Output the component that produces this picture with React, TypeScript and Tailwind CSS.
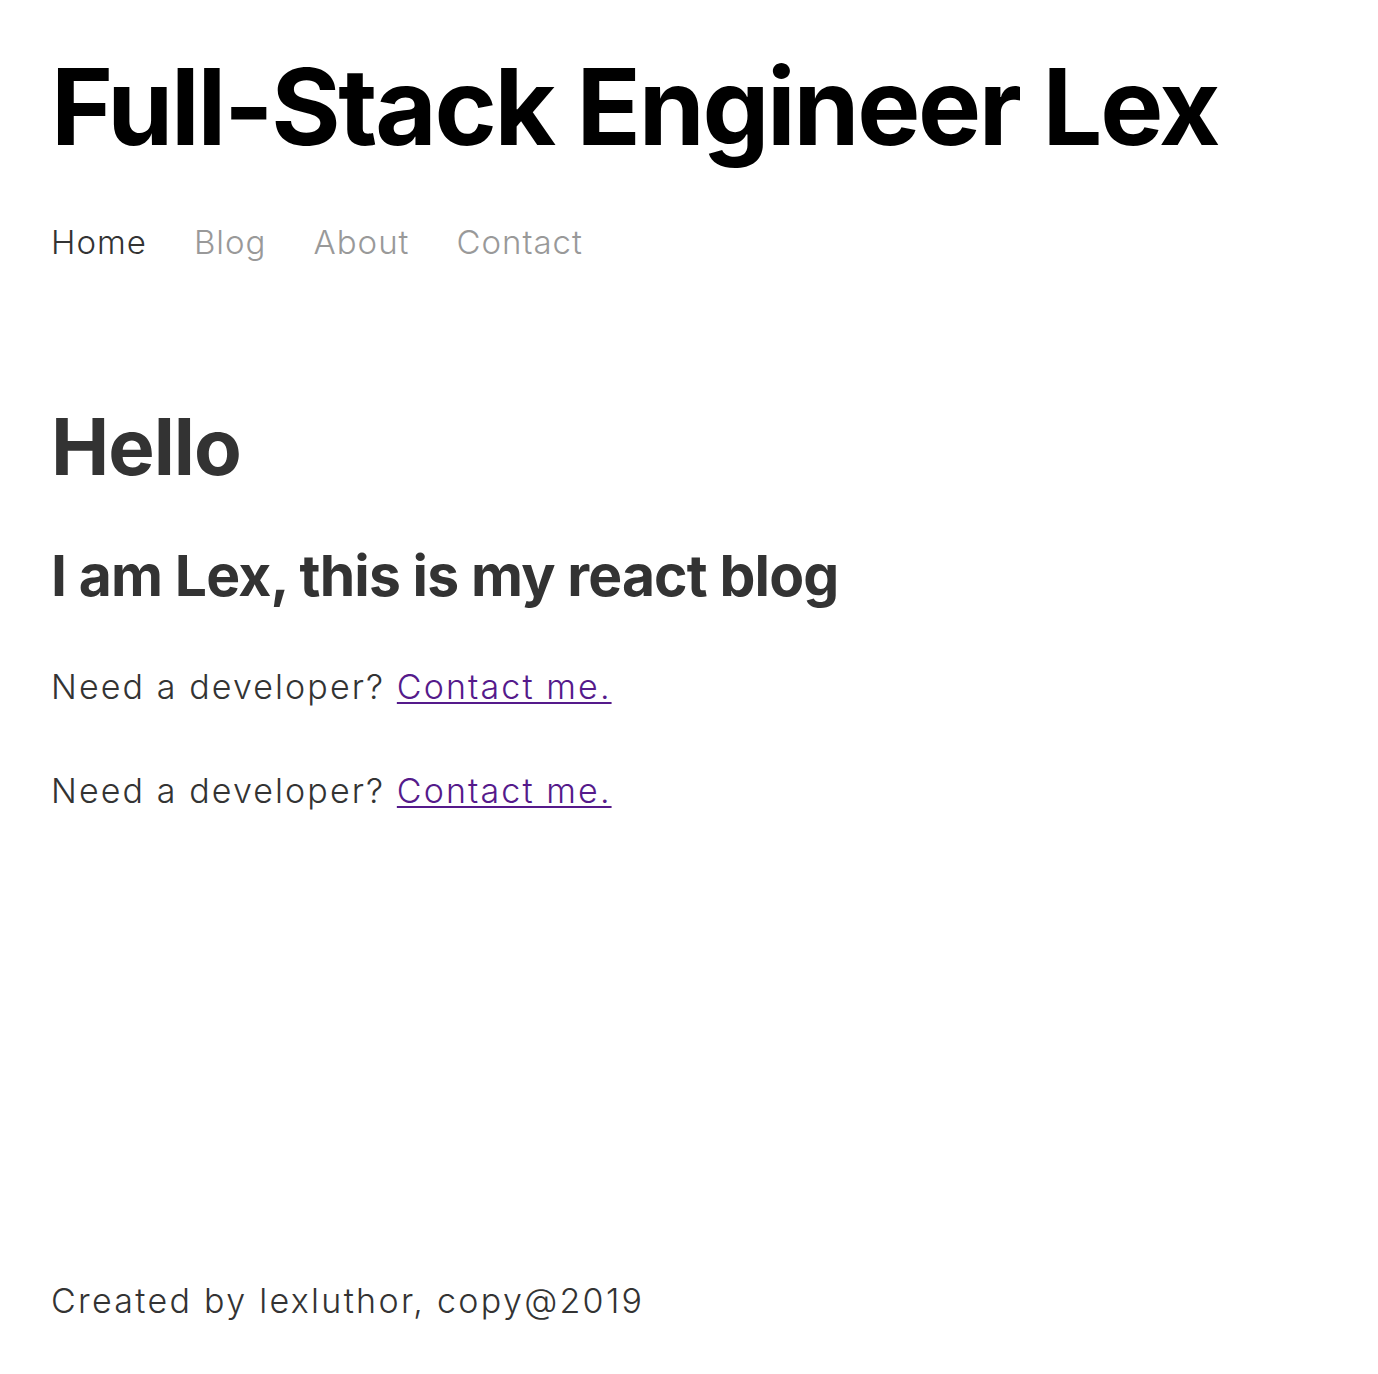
const navItems = ["Home", "Blog", "About", "Contact"];

export default function App() {
  return (
    <div className="flex min-h-[1374px] flex-col bg-white px-[51px] font-['Inter',sans-serif] text-[#333]">
      <header>
        <h1 className="mt-[52px] text-[106px] leading-[110px] font-bold tracking-[-2.3px] text-black">
          Full-Stack Engineer Lex
        </h1>
        <nav className="mt-[60px] flex gap-[47px] text-[33px] leading-[40px] font-light tracking-[1px]">
          {navItems.map((item, i) => (
            <a key={item} className={i === 0 ? "text-[#333]" : "text-[#999]"}>
              {item}
            </a>
          ))}
        </nav>
      </header>
      <main className="mt-[140px]">
        <h2 className="text-[78px] leading-[90px] font-bold tracking-[-1px]">Hello</h2>
        <h3 className="mt-[52px] text-[57px] leading-[64px] font-bold tracking-[-0.85px]">
          I am Lex, this is my react blog
        </h3>
        {[0, 1].map((k) => (
          <p
            key={k}
            className={`${k === 0 ? "mt-[59px]" : "mt-[64px]"} text-[34px] leading-[40px] font-light tracking-[2.1px]`}
          >
            Need a developer?{" "}
            <a href="#" className="text-[#551a8b] underline decoration-2 underline-offset-[3px]">
              Contact me.
            </a>
          </p>
        ))}
      </main>
      <footer className="mt-auto mb-[53px] text-[34px] leading-[40px] font-light tracking-[2.3px]">
        Created by lexluthor, copy@2019
      </footer>
    </div>
  );
}
